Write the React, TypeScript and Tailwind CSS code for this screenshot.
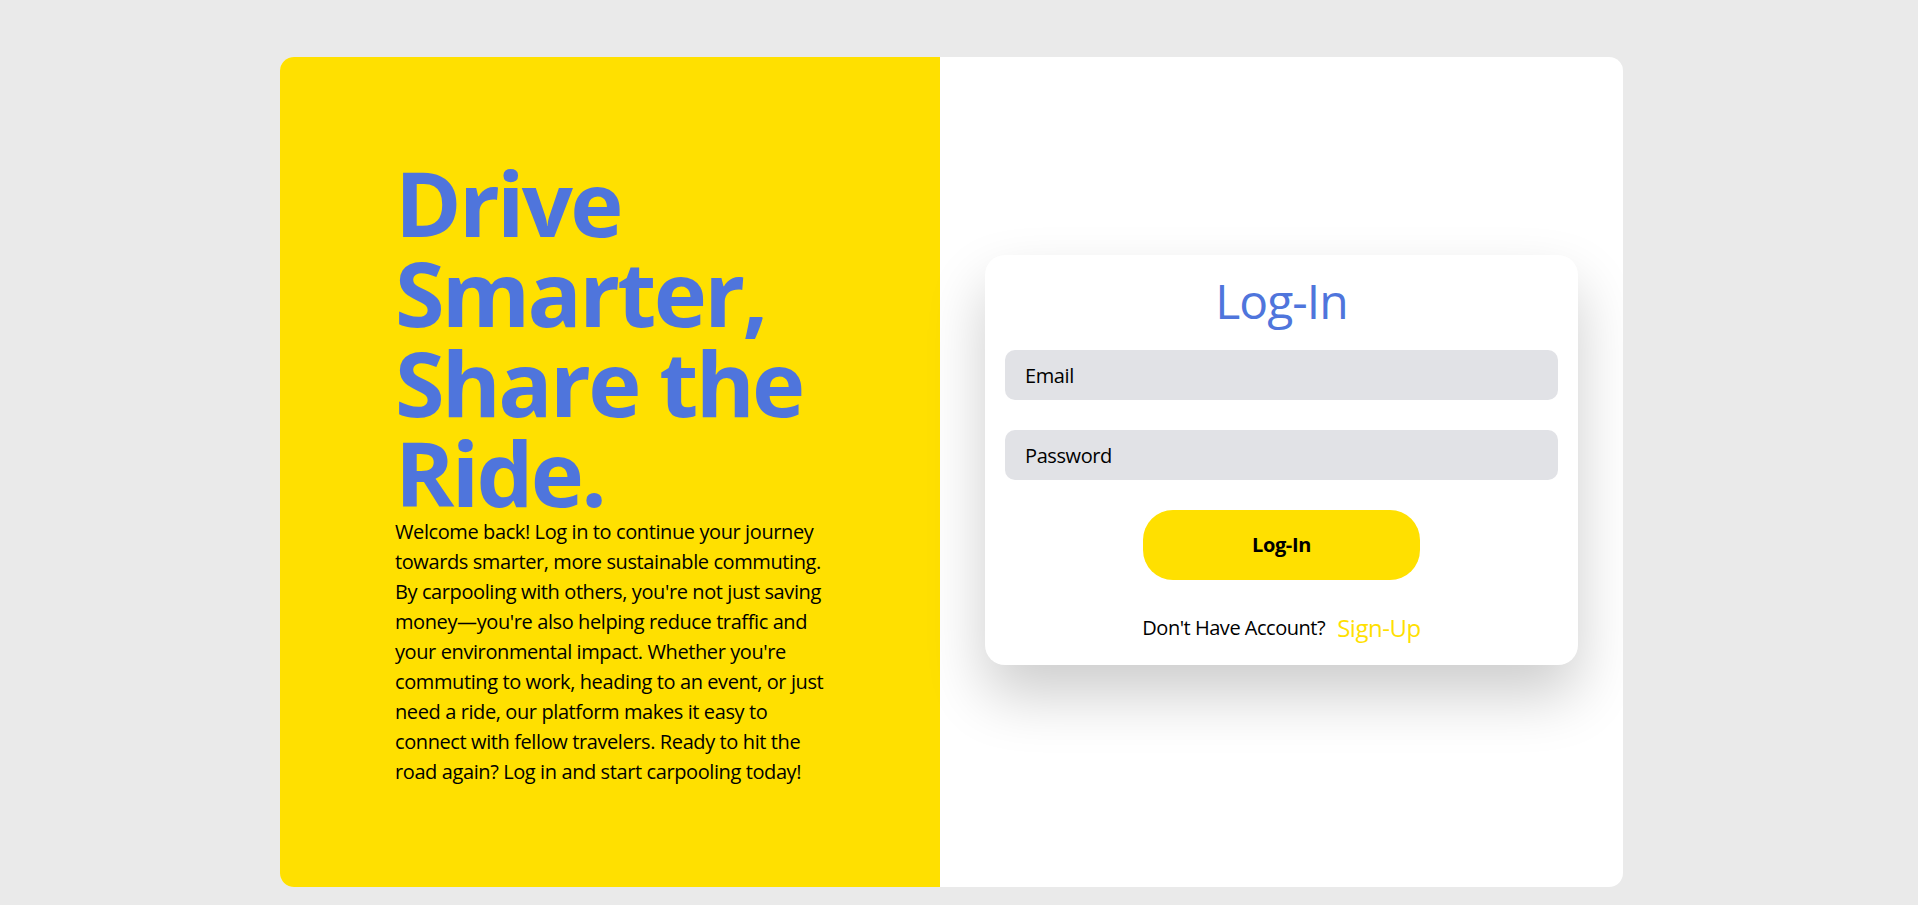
// App.tsx

const font = { fontFamily: '"Open Sans", "Noto Sans", sans-serif' };

const LoginCard = () => {
  return (
    <div className="w-[593px] rounded-[20px] bg-white px-5 pt-[22px] pb-[21px] shadow-[0_30px_60px_rgba(0,0,0,0.2)]">
      {/* タイトル */}
      <h2 className="text-center text-[48px] font-medium leading-none tracking-[-0.02em] text-[#4f75dc] mb-[25px]">
        Log-In
      </h2>

      {/* 入力欄 */}
      <div className="flex flex-col gap-[30px]">
        <input
          type="email"
          placeholder="Email"
          className="h-[50px] w-full rounded-[10px] bg-[#e1e2e6] pl-5 text-xl tracking-[-0.02em] text-black placeholder:text-black outline-none"
        />
        <input
          type="password"
          placeholder="Password"
          className="h-[50px] w-full rounded-[10px] bg-[#e1e2e6] pl-5 text-xl tracking-[-0.02em] text-black placeholder:text-black outline-none"
        />
      </div>

      {/* ボタン */}
      <div className="flex justify-center mt-[30px]">
        <button className="h-[70px] w-[277px] rounded-[30px] bg-[#ffe000] text-xl font-bold tracking-[-0.02em] text-black">
          Log-In
        </button>
      </div>

      {/* サインアップ */}
      <div className="mt-[32px] flex h-8 items-center justify-center tracking-[-0.03em]">
        <span className="text-xl text-black">Don't Have Account?</span>
        <a href="#" className="ml-3 text-2xl text-[#ffe000]">
          Sign-Up
        </a>
      </div>
    </div>
  );
};

const App = () => {
  return (
    <div className="min-h-screen bg-[#eaeaea] pt-[57px] pr-[15px] flex justify-center" style={font}>
      <div className="flex h-[830px] w-[1343px] overflow-hidden rounded-[14px] bg-white">
        {/* 左側 */}
        <div className="flex w-[660px] shrink-0 flex-col justify-center bg-[#ffe000] pl-[115px]">
          <div className="w-[443px]">
            <h1 className="text-[90px] font-bold leading-none tracking-[-0.03em] text-[#4f75dc]">
              Drive Smarter, Share the Ride.
            </h1>
            <p className="text-xl leading-[30px] tracking-[-0.02em] text-black">
              Welcome back! Log in to continue your journey towards smarter, more sustainable
              commuting. By carpooling with others, you're not just saving money—you're also
              helping reduce traffic and your environmental impact. Whether you're commuting to
              work, heading to an event, or just need a ride, our platform makes it easy to
              connect with fellow travelers. Ready to hit the road again? Log in and start
              carpooling today!
            </p>
          </div>
        </div>

        {/* 右側 */}
        <div className="flex flex-1 items-center justify-center pb-6">
          <LoginCard />
        </div>
      </div>
    </div>
  );
};

export default App;
